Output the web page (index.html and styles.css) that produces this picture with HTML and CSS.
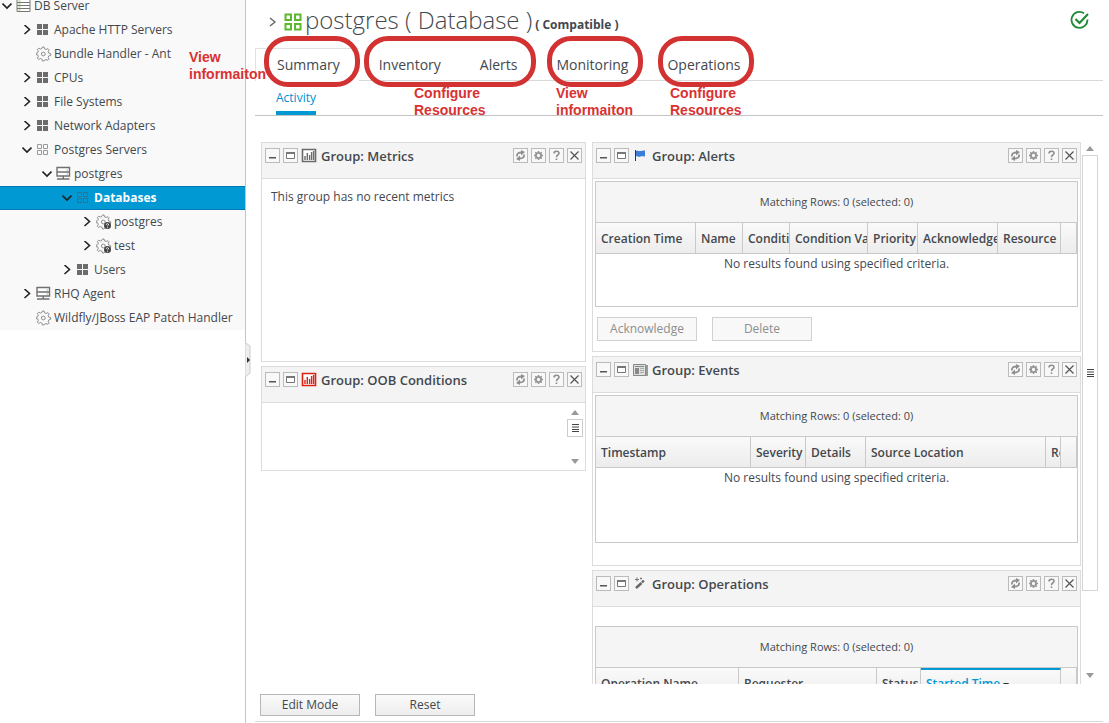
FILE: index.html
```html
<!DOCTYPE html>
<html lang="en">
<head>
<meta charset="utf-8">
<title>postgres ( Database )</title>
<link rel="stylesheet" href="styles.css">
</head>
<body>
<svg class="defs" aria-hidden="true">
  <symbol id="down" viewBox="0 0 10 10"><path d="M.5 2.500 5 7l4.500-4.500" fill="none" stroke="#222" stroke-width="1.600"/></symbol>
  <symbol id="right" viewBox="0 0 10 10"><path d="M2.500 0 7.500 4.500 2.500 9" fill="none" stroke="#222" stroke-width="1.600"/></symbol>
  <symbol id="group" viewBox="0 0 16 16"><path d="M1 2h5v5H1zM7 2h5v5H7zM1 8h5v5H1zM7 8h5v5H7z" fill="#6c6c6c"/></symbol>
  <symbol id="compat" viewBox="0 0 16 16"><path d="M1.500 2.500h4v4h-4zM7.500 2.500h4v4h-4zM1.500 8.500h4v4h-4zM7.500 8.500h4v4h-4z" fill="none" stroke="currentColor" stroke-width="1"/></symbol>
  <symbol id="gear" viewBox="0 0 16 16"><path d="M6.500 1h1.500l.6 1.900 1.500.6 1.800-.9 1.200 1.200-.9 1.800.6 1.500 1.900.6v1.600l-1.900.6-.6 1.500.9 1.800-1.200 1.200-1.800-.9-1.500.6L8 15H6.500l-.6-1.900-1.500-.6-1.800.9-1.200-1.200.9-1.800-.6-1.500L0 8.500V7.300l1.700-.6.6-1.500-.9-1.800 1.200-1.200 1.800.9 1.500-.6z" fill="#f9f9f9" stroke="#8c8c8c"/><circle cx="7.300" cy="8" r="1.900" fill="none" stroke="#8c8c8c"/></symbol>
  <symbol id="platform" viewBox="0 0 16 16"><path d="M1 1.500h13v3H1zM1 4.500h13v3H1zM1 7.500h13v3H1zM1 10.500h13v3H1z" fill="#fff" stroke="#777"/><path d="M2.500 3h2M2.500 6h2M2.500 9h2M2.500 12h2" stroke="#86c96a"/></symbol>
  <symbol id="server" viewBox="0 0 16 16"><path d="M1 1.500h12.500v4.500H1zM1 6h12.500v4H1z" fill="#fff" stroke="#707070" stroke-width="1.400"/><path d="M7.300 10v3M1 13h12.500" stroke="#707070" stroke-width="1.400"/><path d="M10.500 4h1.500M10.500 8h1.500" stroke="#8bc98b"/></symbol>
  <symbol id="unknown" viewBox="0 0 16 16"><use href="#gear"/><circle cx="11.500" cy="11.500" r="3.500" fill="#444"/><path d="M10.200 10.800c.2-1.800 2.800-1.300 2.300.2l-1 .8v.5M11.500 13.300v.9" stroke="#fff" stroke-width=".9" fill="none"/></symbol>
  <symbol id="min" viewBox="0 0 13 13"><path d="M3 8h7v1.500H3z" fill="#555"/></symbol>
  <symbol id="max" viewBox="0 0 13 13"><path d="M2.500 3.500h8v6h-8z" fill="#fff" stroke="#777"/><path d="M2 3h9v2H2z" fill="#777"/></symbol>
  <symbol id="refresh" viewBox="0 0 13 13"><path d="M3 7.500C2.500 4.500 4.500 3.500 7.500 3.500M10 5.500C10.500 8.500 8.500 9.500 5.500 9.500" fill="none" stroke="#8f8f8f" stroke-width="1.800"/><path d="M7 1v5.500L11 3zM6 6.500V12L2 10z" fill="#8f8f8f"/></symbol>
  <symbol id="cog" viewBox="0 0 13 13"><circle cx="6.500" cy="6.500" r="2.600" fill="none" stroke="#969696" stroke-width="1.900"/><path d="M6.500 2v1.500M6.500 9.500V11M2 6.500h1.500M9.500 6.500H11M3.300 3.300l1 1M8.700 8.700l1 1M3.300 9.700l1-1M8.700 4.300l1-1" stroke="#969696" stroke-width="1.500"/></symbol>
  <symbol id="help" viewBox="0 0 13 13"><path d="M4 4.500c0-3 5-3 5-.3C9 6 6.500 6 6.500 8.200M6.500 9.500V11" fill="none" stroke="#8c8c8c" stroke-width="1.600"/></symbol>
  <symbol id="close" viewBox="0 0 13 13"><path d="m2.500 2.500 8 8M10.500 2.500l-8 8" stroke="#555" stroke-width="1.200"/></symbol>
  <symbol id="chart" viewBox="0 0 16 16"><path d="M1.500 1.500h13v12h-13z" fill="#fff" stroke="currentColor" stroke-width="1.600"/><path d="M4 12V8M6.300 12V5M8.600 12V7M10.600 12V4M12.600 12V3" stroke="currentColor" stroke-width="1.400"/></symbol>
  <symbol id="flag" viewBox="0 0 16 16"><path d="M3 2h1v11H3z" fill="#333"/><path d="M4 3c2-1 3 .5 5 0s3-.5 4-.5v6c-2 0-3-.5-4.500 0S6 8.500 4 8z" fill="#3b7dd8"/></symbol>
  <symbol id="news" viewBox="0 0 16 16"><path d="M13 3h3v11h-3z" fill="#999"/><path d="M1.500 2.500h12v11h-12z" fill="#e0e0e0" stroke="#888"/><path d="M3 6h4v6H3zM3 4h9v1H3z" fill="#888"/><path d="M8 6.500h4M8 8.500h4M8 10.500h4" stroke="#aaa"/></symbol>
  <symbol id="wand" viewBox="0 0 16 16"><path d="m4 12 5.500-5M10 6.500l1.800-2" stroke="#666" stroke-width="2.400"/><path d="M3 3.500h4M5 1.500v4M8 2.500h2M9 1.500v2" stroke="#777"/></symbol>
  <symbol id="up" viewBox="0 0 8 5"><path d="M0 5h8L4 0z" fill="#999"/></symbol>
  <symbol id="dn" viewBox="0 0 8 5"><path d="M0 0h8L4 5z" fill="#999"/></symbol>
  <symbol id="grip" viewBox="0 0 8 8"><path d="M1 .5h7M1 3h7M1 5.500h7M1 7.500h7" stroke="#444"/></symbol>
</svg>

<aside class="sidebar">
  <ul class="tree">
    <li class="node l0"><svg class="tw"><use href="#down"/></svg><svg class="ic"><use href="#platform"/></svg><span>DB Server</span></li>
    <li class="node l1"><svg class="tw"><use href="#right"/></svg><svg class="ic"><use href="#group"/></svg><span>Apache HTTP Servers</span></li>
    <li class="node l1"><svg class="tw"></svg><svg class="ic"><use href="#gear"/></svg><span>Bundle Handler - Ant</span></li>
    <li class="node l1"><svg class="tw"><use href="#right"/></svg><svg class="ic"><use href="#group"/></svg><span>CPUs</span></li>
    <li class="node l1"><svg class="tw"><use href="#right"/></svg><svg class="ic"><use href="#group"/></svg><span>File Systems</span></li>
    <li class="node l1"><svg class="tw"><use href="#right"/></svg><svg class="ic"><use href="#group"/></svg><span>Network Adapters</span></li>
    <li class="node l1"><svg class="tw"><use href="#down"/></svg><svg class="ic gray"><use href="#compat"/></svg><span>Postgres Servers</span></li>
    <li class="node l2"><svg class="tw"><use href="#down"/></svg><svg class="ic"><use href="#server"/></svg><span>postgres</span></li>
    <li class="node l3 selected"><svg class="tw"><use href="#down"/></svg><svg class="ic dim"><use href="#compat"/></svg><span>Databases</span></li>
    <li class="node l4"><svg class="tw"><use href="#right"/></svg><svg class="ic"><use href="#unknown"/></svg><span>postgres</span></li>
    <li class="node l4"><svg class="tw"><use href="#right"/></svg><svg class="ic"><use href="#unknown"/></svg><span>test</span></li>
    <li class="node l3"><svg class="tw"><use href="#right"/></svg><svg class="ic"><use href="#group"/></svg><span>Users</span></li>
    <li class="node l1"><svg class="tw"><use href="#right"/></svg><svg class="ic"><use href="#server"/></svg><span>RHQ Agent</span></li>
    <li class="node l1"><svg class="tw"></svg><svg class="ic"><use href="#gear"/></svg><span>Wildfly/JBoss EAP Patch Handler</span></li>
  </ul>
  <svg class="handle" viewBox="0 0 6 36"><path d="M0 .5 5 4v27L0 35.500z" fill="#eee" stroke="#ccc"/><path d="M2 15v6l3-3z" fill="#333"/></svg>
</aside>

<main class="main">
  <header class="title">
    <svg class="crumb" viewBox="0 0 8 12"><path d="m1 2 5 4-5 4" fill="none" stroke="#666" stroke-width="1.400"/></svg>
    <svg class="logo" viewBox="0 0 18 18"><path d="M1.500 1.500h5.500v5.500H1.500zM11 1.500h5.500v5.500H11zM1.500 11h5.500v5.500H1.500zM11 11h5.500v5.500H11z" fill="none" stroke="#5cb82c" stroke-width="2"/></svg>
    <h1>postgres ( Database )</h1><strong>( Compatible )</strong>
    <svg class="ok" viewBox="0 0 20 20"><path d="M17.500 9.500A8 8 0 1 1 14 3.200" fill="none" stroke="#1f8a34" stroke-width="1.800"/><path d="m5.500 9 4 4L18 4" fill="none" stroke="#1f8a34" stroke-width="2.200"/></svg>
  </header>
  <nav class="tabs">
    <a href="#" class="tab current">Summary</a><a href="#" class="tab">Inventory</a><a href="#" class="tab">Alerts</a><a href="#" class="tab">Monitoring</a><a href="#" class="tab">Operations</a>
  </nav>
  <nav class="subtabs"><a href="#">Activity</a></nav>

  <div class="dash">
    <div class="col">
      <section class="portlet metrics">
        <header class="ph"><button aria-label="Minimize"><svg><use href="#min"/></svg></button><button aria-label="Maximize"><svg><use href="#max"/></svg></button><svg class="pi charcoal"><use href="#chart"/></svg><h2>Group: Metrics</h2><button aria-label="Refresh"><svg><use href="#refresh"/></svg></button><button aria-label="Settings"><svg><use href="#cog"/></svg></button><button aria-label="Help"><svg><use href="#help"/></svg></button><button aria-label="Close"><svg><use href="#close"/></svg></button></header>
        <p class="note">This group has no recent metrics</p>
      </section>
      <section class="portlet oob">
        <header class="ph"><button aria-label="Minimize"><svg><use href="#min"/></svg></button><button aria-label="Maximize"><svg><use href="#max"/></svg></button><svg class="pi red"><use href="#chart"/></svg><h2>Group: OOB Conditions</h2><button aria-label="Refresh"><svg><use href="#refresh"/></svg></button><button aria-label="Settings"><svg><use href="#cog"/></svg></button><button aria-label="Help"><svg><use href="#help"/></svg></button><button aria-label="Close"><svg><use href="#close"/></svg></button></header>
        <div class="minibar"><svg class="arr"><use href="#up"/></svg><div class="minithumb"><svg class="grip"><use href="#grip"/></svg></div><svg class="arr end"><use href="#dn"/></svg></div>
      </section>
    </div>
    <div class="col">
      <section class="portlet alerts">
        <header class="ph"><button aria-label="Minimize"><svg><use href="#min"/></svg></button><button aria-label="Maximize"><svg><use href="#max"/></svg></button><svg class="pi"><use href="#flag"/></svg><h2>Group: Alerts</h2><button aria-label="Refresh"><svg><use href="#refresh"/></svg></button><button aria-label="Settings"><svg><use href="#cog"/></svg></button><button aria-label="Help"><svg><use href="#help"/></svg></button><button aria-label="Close"><svg><use href="#close"/></svg></button></header>
        <div class="grid">
          <div class="rows">Matching Rows: 0 (selected: 0)</div>
          <table>
            <colgroup><col class="w100"><col class="w47"><col class="w47"><col class="w78"><col class="w50"><col class="w80"><col class="w63"><col></colgroup>
            <thead><tr><th>Creation Time</th><th>Name</th><th>Condition</th><th>Condition Value</th><th>Priority</th><th>Acknowledged</th><th>Resource</th><th></th></tr></thead>
            <tbody><tr><td colspan="8">No results found using specified criteria.</td></tr></tbody>
          </table>
        </div>
        <div class="actions"><button class="btn" disabled>Acknowledge</button><button class="btn" disabled>Delete</button></div>
      </section>
      <section class="portlet events">
        <header class="ph"><button aria-label="Minimize"><svg><use href="#min"/></svg></button><button aria-label="Maximize"><svg><use href="#max"/></svg></button><svg class="pi"><use href="#news"/></svg><h2>Group: Events</h2><button aria-label="Refresh"><svg><use href="#refresh"/></svg></button><button aria-label="Settings"><svg><use href="#cog"/></svg></button><button aria-label="Help"><svg><use href="#help"/></svg></button><button aria-label="Close"><svg><use href="#close"/></svg></button></header>
        <div class="grid tall">
          <div class="rows">Matching Rows: 0 (selected: 0)</div>
          <table>
            <colgroup><col class="w155"><col class="w55"><col class="w60"><col class="w180"><col class="w15"><col></colgroup>
            <thead><tr><th>Timestamp</th><th>Severity</th><th>Details</th><th>Source Location</th><th>Resource</th><th></th></tr></thead>
            <tbody><tr><td colspan="6">No results found using specified criteria.</td></tr></tbody>
          </table>
        </div>
      </section>
      <section class="portlet ops">
        <header class="ph"><button aria-label="Minimize"><svg><use href="#min"/></svg></button><button aria-label="Maximize"><svg><use href="#max"/></svg></button><svg class="pi"><use href="#wand"/></svg><h2>Group: Operations</h2><button aria-label="Refresh"><svg><use href="#refresh"/></svg></button><button aria-label="Settings"><svg><use href="#cog"/></svg></button><button aria-label="Help"><svg><use href="#help"/></svg></button><button aria-label="Close"><svg><use href="#close"/></svg></button></header>
        <div class="grid">
          <div class="rows">Matching Rows: 0 (selected: 0)</div>
          <table>
            <colgroup><col class="w143"><col class="w138"><col class="w44"><col class="w140"><col></colgroup>
            <thead><tr><th>Operation Name</th><th>Requester</th><th>Status</th><th class="sorted">Started Time <svg class="sort" viewBox="0 0 6 4"><path d="M0 0h6L3 4z" fill="#333"/></svg></th><th></th></tr></thead>
          </table>
        </div>
      </section>
    </div>
    <div class="scroll"><svg class="arr"><use href="#up"/></svg><div class="thumb"><svg class="grip"><use href="#grip"/></svg></div><svg class="arr end"><use href="#dn"/></svg></div>
  </div>
  <footer class="foot"><button class="btn">Edit Mode</button><button class="btn">Reset</button></footer>
</main>

<div class="ring r1"></div><div class="ring r2"></div><div class="ring r3"></div><div class="ring r4"></div>
<div class="mark m1">View<br>informaiton</div>
<div class="mark m2">Configure<br>Resources</div>
<div class="mark m3">View<br>informaiton</div>
<div class="mark m4">Configure<br>Resources</div>
</body>
</html>
```
FILE: styles.css
```css
* { box-sizing: border-box; }
body {
  margin: 0;
  height: 100vh;
  display: flex;
  overflow: hidden;
  position: relative;
  background: #fff;
  color: #43484e;
  font: 12px/18px "Open Sans", "Noto Sans", sans-serif;
}
.defs { position: absolute; width: 0; height: 0; }
a { color: inherit; text-decoration: none; }
button { padding: 0; font: inherit; color: inherit; }

.sidebar { position: relative; flex: 0 0 246px; border-right: 1px solid #c4c4c4; }
.tree { list-style: none; margin: -6px 0 0; padding: 0; background: #f9f9f9; }
.node { height: 24px; display: flex; align-items: center; padding-left: 2px; white-space: nowrap; }
.l1 { padding-left: 22px; }
.l2 { padding-left: 42px; }
.l3 { padding-left: 62px; }
.l4 { padding-left: 82px; }
.tw { width: 10px; height: 10px; margin-right: 4px; }
.ic { width: 16px; height: 16px; margin-right: 2px; }
.gray { color: #999; }
.dim { color: #2b7590; }
.selected { background: #0099d3; border: solid #0079b5; border-width: 1px 0; color: #fff; font-weight: 700; }
.handle { position: absolute; left: 245px; top: 342px; width: 6px; height: 36px; }

.main { flex: 1; min-width: 0; display: flex; flex-direction: column; padding: 0 6px 0 9px; }
.title { height: 48px; display: flex; align-items: flex-start; padding: 4px 13px 0 14px; }
.crumb { width: 8px; height: 12px; margin: 12px 7px 0 0; }
.logo { width: 18px; height: 18px; margin: 9px 3px 0 0; }
h1 { margin: 0; font-size: 24px; line-height: 32px; font-weight: 300; }
.title strong { margin: 12px 0 0 3px; }
.ok { width: 20px; height: 20px; margin: 6px 0 0 auto; }

.tabs { height: 33px; display: flex; font-size: 14px; line-height: 34px; }
.tabs::after { content: ""; flex: 1; border-bottom: 1px solid #d9d9d9; }
.tab { padding: 0 19px 0 20px; border-bottom: 1px solid #d9d9d9; }
.current { padding-left: 21px; border: 1px solid #e2e2e2; border-width: 1px 0 0 1px; line-height: 32px; }
.subtabs { height: 35px; padding: 0 21px; display: flex; border-bottom: 1px solid #c4c4c4; }
.subtabs a { color: #0090cf; line-height: 34px; border-bottom: 4px solid #0099d3; height: 34px; }

.dash {
  flex: 1; min-height: 0; overflow: hidden; margin: 26px 0 0 6px;
  display: grid; grid-template-columns: 325fr 489fr 16px; grid-template-rows: minmax(0, 1fr); column-gap: 6px;
}
.col { min-width: 0; display: flex; flex-direction: column; gap: 4px; }
.portlet { flex: none; border: 1px solid #dcdcdc; min-height: 210px; }
.metrics { min-height: 220px; }
.oob { min-height: 105px; }
.ph { height: 36px; padding: 5px 3px; display: flex; gap: 3px; background: #f4f4f4; border-bottom: 1px solid #dcdcdc; }
.ph button { width: 15px; height: 15px; border: 1px solid #bbb; background: #f8f8f8; }
.ph button svg { display: block; width: 13px; height: 13px; }
.pi { width: 16px; height: 16px; }
.charcoal { color: #6a6a6a; }
.red { color: #dd2211; }
h2 { flex: 1; margin: 0 0 0 1px; font-size: 13px; line-height: 16px; font-weight: 600; }
.note { margin: 9px; }
.minibar { display: flex; flex-direction: column; align-items: center; width: 16px; height: 67px; padding-top: 7px; margin: 0 2px 0 auto; }
.arr { display: block; width: 8px; height: 5px; flex: none; }
.end { margin-top: auto; margin-bottom: 6px; }
.minithumb { display: grid; place-items: center; width: 16px; height: 18px; margin-top: 4px; border: 1px solid #ccc; }
.grip { display: block; width: 8px; height: 8px; }
.scroll { display: flex; flex-direction: column; align-items: center; width: 16px; margin-left: -5px; padding-top: 4px; }
.thumb { display: grid; place-items: center; width: 16px; flex: 0 0 81%; margin-top: 4px; border: 1px solid #d4d4d4; }

.grid { margin: 2px; border: 1px solid #c9c9c9; height: 126px; overflow: hidden; }
.tall { height: 148px; }
.ops .grid { margin-top: 19px; }
.rows { height: 41px; line-height: 40px; font-size: 11px; text-align: center; background: #f5f5f5; border-bottom: 1px solid #c9c9c9; }
table { width: 100%; table-layout: fixed; border-collapse: separate; border-spacing: 0; }
th { height: 31px; padding: 2px 0 0 5px; text-align: left; font-weight: 600; white-space: nowrap; overflow: hidden; background: linear-gradient(#fafafa, #ececec); border-right: 1px solid #c9c9c9; border-bottom: 1px solid #c9c9c9; }
td { padding: 1px 0 0; text-align: center; }
.sorted { padding-top: 0; color: #0099d3; border-top: 2px solid #0099d3; }
.sort { width: 6px; height: 4px; vertical-align: middle; }
.w15 { width: 15px; }
.w44 { width: 44px; }
.w47 { width: 47px; }
.w50 { width: 50px; }
.w55 { width: 55px; }
.w60 { width: 60px; }
.w63 { width: 63px; }
.w78 { width: 78px; }
.w80 { width: 80px; }
.w100 { width: 100px; }
.w138 { width: 138px; }
.w140 { width: 140px; }
.w143 { width: 143px; }
.w155 { width: 155px; }
.w180 { width: 180px; }

.actions { display: flex; gap: 15px; padding: 8px 2px 8px 4px; }
.btn { width: 100px; height: 22px; border: 1px solid #b7b7b7; background: linear-gradient(#fafafa, #ededed); }
.btn:disabled { height: 24px; color: #8e8e8e; border-color: #d1d1d1; background: #f8f8f8; }
.foot { flex: none; height: 38px; margin-bottom: 1px; padding: 10px 5px 0; display: flex; gap: 15px; border-bottom: 1px solid #d9d9d9; }

.ring { position: absolute; top: 36px; width: 96px; height: 51px; border: 5px solid #d23232; border-radius: 24px; pointer-events: none; }
.r1 { left: 264px; }
.r2 { left: 364px; width: 172px; }
.r3 { left: 547px; }
.r4 { left: 658px; }
.mark { position: absolute; top: 85px; color: #d83232; font: bold 14px/17px "Liberation Sans", Arial, sans-serif; pointer-events: none; }
.m1 { left: 189px; top: 49px; }
.m2 { left: 414px; }
.m3 { left: 556px; }
.m4 { left: 670px; }
```
